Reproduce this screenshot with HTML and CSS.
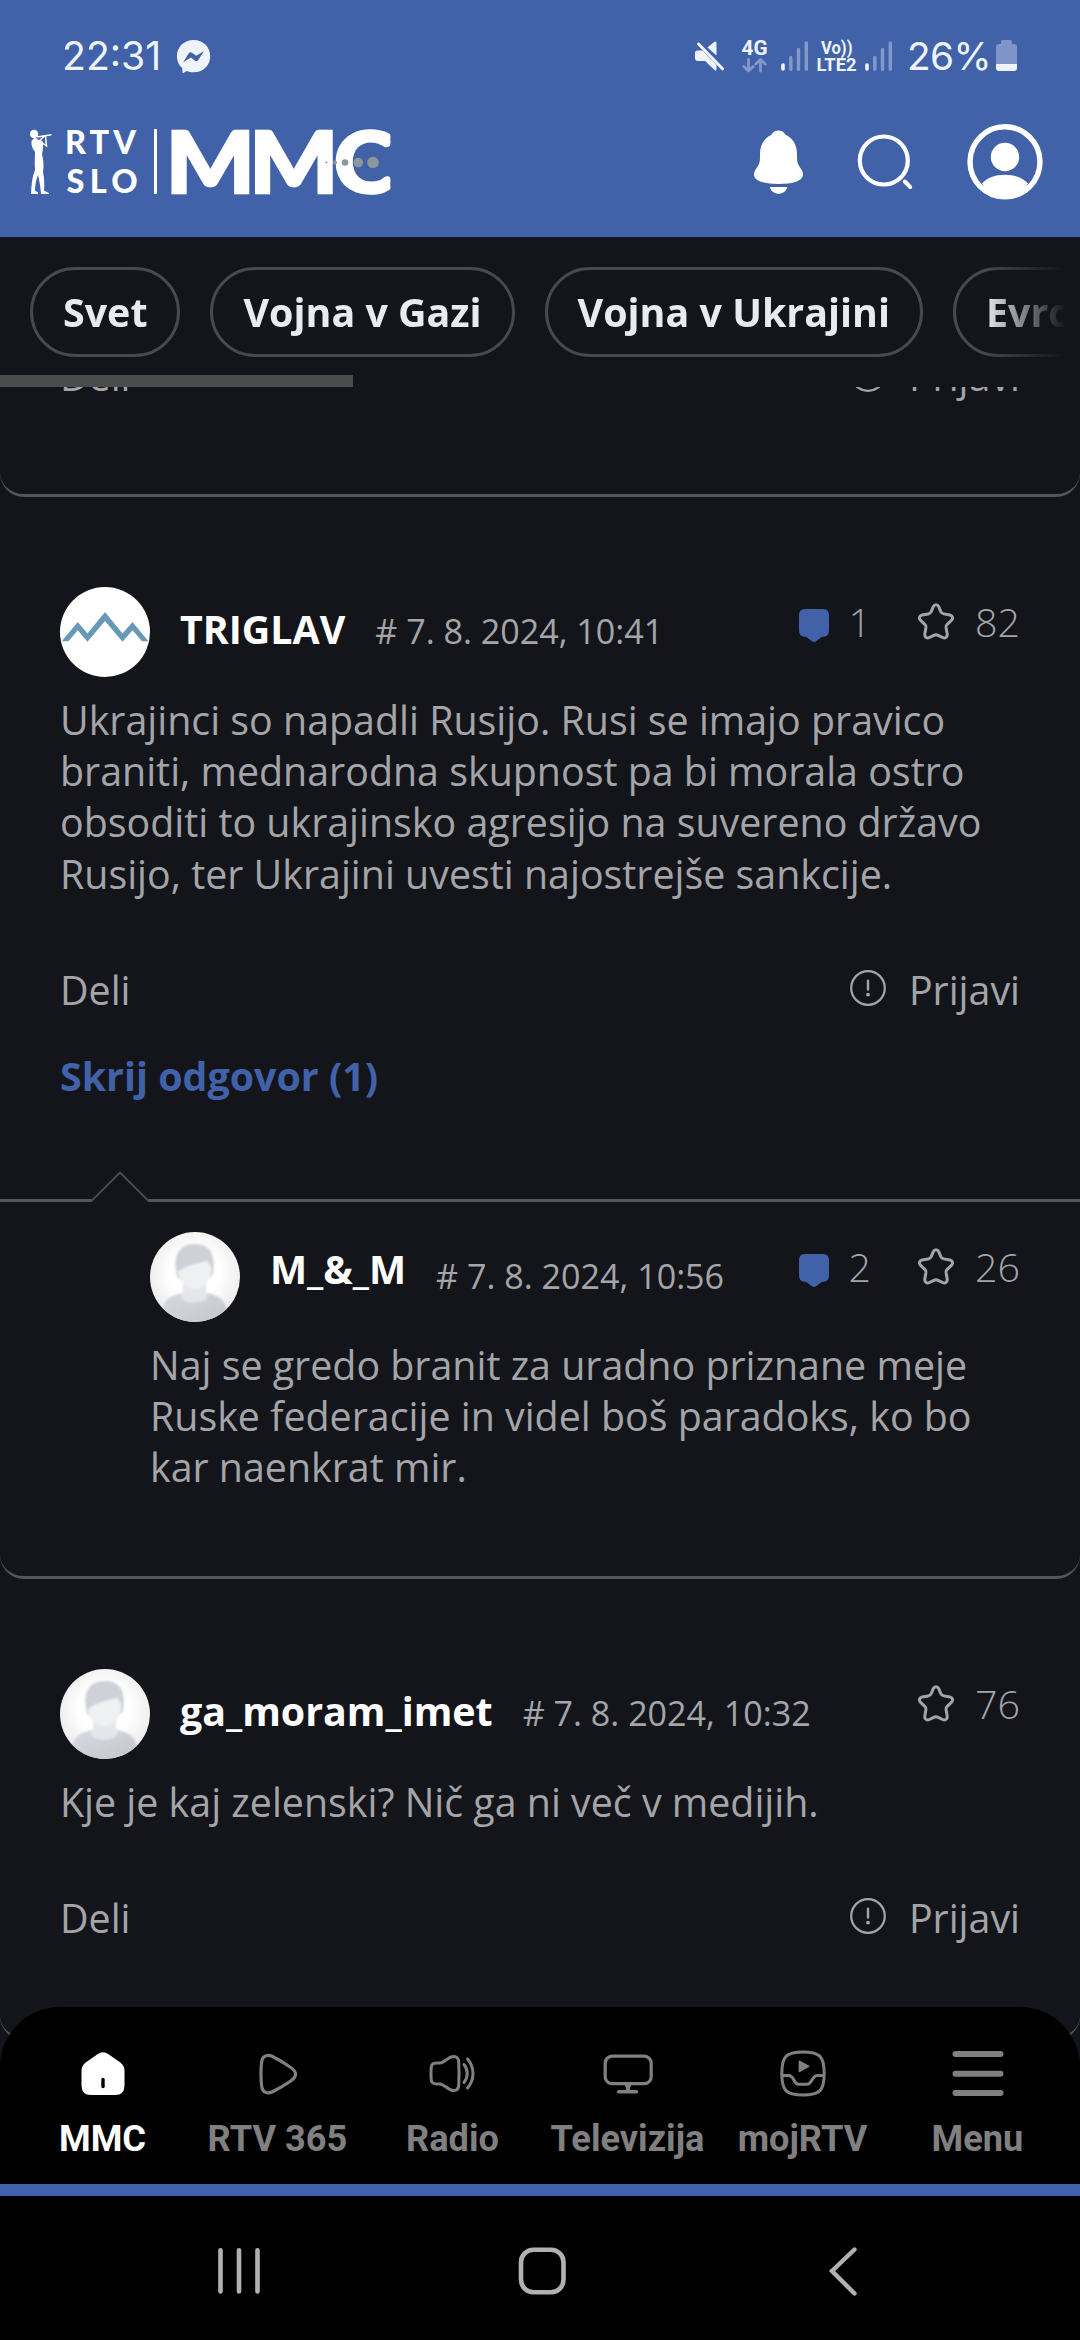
FILE: index.html
```html
<!DOCTYPE html>
<html lang="sl">
<head>
<meta charset="utf-8">
<title>RTV SLO MMC</title>
<link rel="stylesheet" href="styles.css">
</head>
<body>
<svg class="defs" aria-hidden="true">
  <defs>
    <radialGradient id="avatar-bg" cx="50%" cy="45%" r="55%">
      <stop offset="0.5" stop-color="#ffffff"/>
      <stop offset="1" stop-color="#ececee"/>
    </radialGradient>
    <linearGradient id="avatar-body" x1="0" y1="0" x2="1" y2="1">
      <stop offset="0" stop-color="#d6d9df"/>
      <stop offset="1" stop-color="#c3c6cb"/>
    </linearGradient>
    <clipPath id="avatar-clip"><circle cx="45" cy="45" r="45"/></clipPath>
    <filter id="soft" x="-10%" y="-10%" width="120%" height="120%"><feGaussianBlur stdDeviation="0.9"/></filter>
  </defs>
  <symbol id="person" viewBox="0 0 90 90">
    <circle cx="45" cy="45" r="45" fill="url(#avatar-bg)"/>
    <g clip-path="url(#avatar-clip)">
      <g filter="url(#soft)">
        <path d="M12 92 C11 70 15 65 32 61 H57 C74 65 78 70 77 92Z" fill="url(#avatar-body)"/>
        <path d="M33 48 H56 V60 C58 62 58 65 56 67 C51 72 37 72 32 67 C30 64 31 62 33 60Z" fill="#e4e6e9"/>
        <path d="M27 44 C22 25 28 12 45 12 C60 12 66 22 63 42 C60 50 30 52 27 44Z" fill="#ced1d7"/>
        <path d="M28 40 C34 34 48 31 57 29 C60 32 62 36 61 41 C59 50 53 57 45 57 C36 57 29 49 28 40Z" fill="#eff0f2"/>
      </g>
    </g>
  </symbol>
  <symbol id="star" viewBox="0 0 36 37">
    <path d="M15.3 3.6 C16.4 1.1 19.6 1.1 20.7 3.6 L22.8 8.6 C23.4 9.9 24.3 10.6 25.8 10.9 L32 12 C34.8 12.6 35.4 15.4 33.4 17.3 L29.2 21.3 C28.2 22.3 27.9 23.3 28.1 24.7 L29.2 31 C29.6 34 27.2 35.8 24.6 34.5 L20.2 32.3 C18.7 31.6 17.3 31.6 15.8 32.3 L11.4 34.5 C8.8 35.8 6.4 34 6.8 31 L7.9 24.7 C8.1 23.3 7.8 22.3 6.8 21.3 L2.6 17.3 C0.6 15.4 1.2 12.6 4 12 L10.2 10.9 C11.7 10.6 12.6 9.9 13.2 8.6Z" fill="none" stroke="#a4a5a9" stroke-width="3"/>
  </symbol>
  <symbol id="bubble" viewBox="0 0 30 33">
    <path d="M6 0 H24 Q30 0 30 6 V21 Q30 27.5 24.5 27.8 Q22.5 27.8 21 29.2 L17 32.2 Q15 33.6 13 32.2 L9 29.2 Q7.5 27.8 5.5 27.8 Q0 27.5 0 21 V6 Q0 0 6 0Z" fill="#4162a9"/>
  </symbol>
  <symbol id="report" viewBox="0 0 36 36">
    <circle cx="18" cy="18" r="16.8" fill="none" stroke="#a4a5a9" stroke-width="2.2"/>
    <path d="M18 10.8 V19.6" stroke="#a4a5a9" stroke-width="2.4" stroke-linecap="round"/>
    <circle cx="18" cy="24.6" r="1.9" fill="#a4a5a9"/>
  </symbol>
  <symbol id="signal" viewBox="0 0 28 30">
    <path d="M9.8 16.5V28.2M17.5 8.5V28.2M25.3 2V28.2" stroke="#8299c9" stroke-width="3.4" stroke-linecap="round"/>
    <path d="M2 24V28" stroke="#eff3fc" stroke-width="3.6" stroke-linecap="round"/>
  </symbol>
</svg>

<div class="screen">
  <header class="top">
    <div class="status">
      <span class="status-text">22:31</span>
      <svg class="ico-messenger" viewBox="176 36 36 40" width="36" height="40">
        <path d="M193.6 40 C203 40 210.2 46.900 210.200 56.200 C210.200 65.500 203 72.300 193.600 72.300 C191 72.300 188.700 71.800 186.600 71 L183.500 73 C183 73.300 182.500 73 182.500 72.400 L182.300 68.200 C178.900 65.300 176.900 61.200 176.900 56.200 C176.900 46.900 184.200 40 193.600 40Z" fill="#eff3fc"/>
        <path d="M183.200 62.200 L188.600 53.600 C189.500 52.200 191 52 192.300 52.900 L196.200 55.800 L203.800 51.200 L198.500 59.800 C197.600 61.200 196 61.500 194.700 60.500 L190.900 57.600Z" fill="#4162a9"/>
      </svg>
      <span class="spacer"></span>
      <svg viewBox="692 36 34 40" width="34" height="40">
        <path d="M694 53 Q694 50.500 696.500 50.500 H701.500 L715.500 65 V69 Q715.500 71.500 713.500 70 L704 61 H697 Q694 61 694 58Z M706.500 47.500 L713.200 42 Q715.500 40.500 715.500 43.500 V55.500Z" fill="#eff3fc"/>
        <path d="M697.500 44 L721.500 68.800" stroke="#eff3fc" stroke-width="3" stroke-linecap="round"/>
      </svg>
      <svg class="ico-4g" viewBox="740 36 28 40" width="28" height="40">
        <text class="tiny" x="740.500" y="54.600" font-size="19.600" textLength="26" lengthAdjust="spacingAndGlyphs">4G</text>
        <path d="M747.500 59.500V71M742.800 66.500L747.500 71L752.200 66.500M759.500 71V59.500M754.800 64L759.500 59.500L764.200 64" fill="none" stroke="#8299c9" stroke-width="2.800" stroke-linecap="round" stroke-linejoin="round"/>
      </svg>
      <svg class="ico-signal"><use href="#signal"/></svg>
      <svg class="ico-lte" viewBox="815 36 42 40" width="42" height="40">
        <text class="tiny" x="820" y="54" font-size="18" textLength="31.500" lengthAdjust="spacingAndGlyphs">Vo))</text>
        <text class="tiny" x="815.500" y="71.200" font-size="18" textLength="40" lengthAdjust="spacingAndGlyphs">LTE2</text>
      </svg>
      <svg class="ico-signal ico-signal-2"><use href="#signal"/></svg>
      <span class="status-text battery-text">26%</span>
      <svg class="ico-battery" viewBox="996 36 21 40" width="21" height="40">
        <path d="M1002.500 40 H1010.500 Q1012 40 1012 42 V44 H1014 Q1017 44 1017 47 V64 H996 V47 Q996 44 999 44 H1001 V42 Q1001 40 1002.500 40Z" fill="#7f95c7"/>
        <path d="M996 64 H1017 V68 Q1017 71 1014 71 H999 Q996 71 996 68Z" fill="#eff3fc"/>
      </svg>
    </div>

    <div class="brand-row">
      <svg viewBox="30 120 366 84" width="366" height="84" role="img" aria-label="RTV SLO MMC">
        <g fill="#fff">
          <circle cx="34" cy="134" r="4.200"/>
          <path d="M35 137 L38.500 140 L42.500 141 C43.500 146 43 150 42 154 C43.500 160 44 166 43 172 C44.500 179 44.500 185 44 190.500 L49 193 V194 H41 C40.500 187 39.500 181 38 175 C36 180 35 186 35 190.500 L38 192.500 V194 H31 C31.500 185 32 177 35 170 C34.500 162 35 156 35 152 C32.500 149 31 145 31.500 141Z"/>
          <path d="M37 137 L51.500 134.800 M38 142 L45 135.500 M41 142 L46.500 146 L45.500 136" fill="none" stroke="#fff" stroke-width="1.500"/>
          <text class="brand-small" x="65" y="153.500" textLength="71" lengthAdjust="spacing">RTV</text>
          <text class="brand-small" x="66.500" y="192.500" textLength="71" lengthAdjust="spacing">SLO</text>
          <rect x="154" y="129" width="3" height="65"/>
          <svg x="165" y="120" width="225.300" height="84" viewBox="165 120 225.300 84">
            <text class="brand-big" transform="scale(1.090 1)" x="152.100 228.700 306.100" y="192.800">MMC</text>
          </svg>
        </g>
        <g fill="#8b979b">
          <circle cx="326.500" cy="162.500" r="1"/><circle cx="335" cy="162.500" r="2"/><circle cx="345" cy="162.500" r="3.300"/><circle cx="358.300" cy="162.500" r="4.800"/><circle cx="373" cy="162.500" r="5.800"/>
        </g>
      </svg>
      <span class="spacer"></span>
      <svg viewBox="750 120 56 84" width="56" height="84">
        <path d="M778.500 130.500 C781.800 130.500 784 132 785.600 134.800 C793 138.500 797 145 797 154 V158 C797 162 798 164.500 800 167.500 C802 170.200 803 172 803 174.500 C803 181 793 184 778.500 184 C764 184 754 181 754 174.500 C754 172 755 170.200 757 167.500 C759 164.500 760 162 760 158 V154 C760 145 764 138.500 771.400 134.800 C773 132 775.200 130.500 778.500 130.500Z M769.700 187 H787.500 C786 191.500 782.500 193.800 778.600 193.800 C774.700 193.800 771.200 191.500 769.700 187Z" fill="#fff"/>
      </svg>
      <svg class="ico-search" viewBox="854 120 62 84" width="62" height="84">
        <circle cx="883.800" cy="160.500" r="24" fill="none" stroke="#fff" stroke-width="4.200"/>
        <path d="M904.800 181.500 L910.200 187" stroke="#fff" stroke-width="4" stroke-linecap="round"/>
      </svg>
      <svg class="ico-profile" viewBox="967 120 76 84" width="76" height="84">
        <circle cx="1005" cy="161.800" r="35" fill="none" stroke="#fff" stroke-width="5.400"/>
        <circle cx="1005" cy="157" r="14.200" fill="#fff"/>
        <path d="M982 183.500 C987 178 995 174.800 1005 174.800 C1015 174.800 1023 178 1028 183.500 C1023 192 1015 197 1005 197 C995 197 987 192 982 183.500Z" fill="#fff"/>
      </svg>
    </div>
  </header>

  <nav class="topics">
    <a class="chip">Svet</a>
    <a class="chip">Vojna v Gazi</a>
    <a class="chip">Vojna v Ukrajini</a>
    <a class="chip">Evropska unija</a>
  </nav>
  <div class="progress"><div class="progress-bar"></div></div>

  <main class="feed">
    <section class="card card-clipped">
      <div class="actions"><span>Deli</span><span class="report"><svg class="ico-report"><use href="#report"/></svg>Prijavi</span></div>
    </section>

    <section class="card card-thread">
      <div class="head">
        <svg class="avatar" viewBox="0 0 90 90">
          <circle cx="45" cy="45" r="45" fill="#fff"/>
          <path d="M1.800 54.300 L17.700 35 L27.500 46.500 L45 25 L62.500 46.500 L72.500 35 L88.400 54.300 H82 L72.500 43.300 L62.500 54.700 L45 34 L27.500 54.700 L17.700 43.300 L8.500 54.300Z" fill="#6699b8"/>
        </svg>
        <b class="name">TRIGLAV</b>
        <span class="date"># 7. 8. 2024, 10:41</span>
        <span class="stats"><svg class="ico-bubble"><use href="#bubble"/></svg><span class="replies-count">1</span><svg class="ico-star"><use href="#star"/></svg>82</span>
      </div>
      <p class="text">Ukrajinci so napadli Rusijo. Rusi se imajo pravico<br>braniti, mednarodna skupnost pa bi morala ostro<br>obsoditi to ukrajinsko agresijo na suvereno državo<br>Rusijo, ter Ukrajini uvesti najostrejše sankcije.</p>
      <div class="actions"><span>Deli</span><span class="report"><svg class="ico-report"><use href="#report"/></svg>Prijavi</span></div>
      <a class="toggle">Skrij odgovor (1)</a>
      <div class="reply">
        <svg class="notch" viewBox="0 0 60 31" width="60" height="31"><path d="M1.500 31 L30 1.500 L58.500 31Z" fill="#14151a"/><path d="M1 30.500 L30 1.500 L59 30.500" fill="none" stroke="#4c4d50" stroke-width="1.800"/></svg>
        <div class="head">
          <svg class="avatar"><use href="#person"/></svg>
          <b class="name">M_&amp;_M</b>
          <span class="date"># 7. 8. 2024, 10:56</span>
          <span class="stats"><svg class="ico-bubble"><use href="#bubble"/></svg><span class="replies-count">2</span><svg class="ico-star"><use href="#star"/></svg>26</span>
        </div>
        <p class="text">Naj se gredo branit za uradno priznane meje<br>Ruske federacije in videl boš paradoks, ko bo<br>kar naenkrat mir.</p>
      </div>
    </section>

    <section class="card">
      <div class="head">
        <svg class="avatar"><use href="#person"/></svg>
        <b class="name">ga_moram_imet</b>
        <span class="date"># 7. 8. 2024, 10:32</span>
        <span class="stats"><svg class="ico-star"><use href="#star"/></svg>76</span>
      </div>
      <p class="text">Kje je kaj zelenski? Nič ga ni več v medijih.</p>
      <div class="actions"><span>Deli</span><span class="report"><svg class="ico-report"><use href="#report"/></svg>Prijavi</span></div>
    </section>
  </main>

  <nav class="tabs">
    <a class="tab tab-active">
      <svg viewBox="0 0 60 50"><path d="M24.500 4.200 Q30 .5 35.500 4.200 L47 12.300 Q51.500 15.500 51.500 20.500 V35.500 Q51.500 45 42 45 H18 Q8.500 45 8.500 35.500 V20.500 Q8.500 15.500 13 12.300Z" fill="#fff"/><path d="M30 29.500V36.500" stroke="#000" stroke-width="3.400" stroke-linecap="round"/></svg>
      <span>MMC</span>
    </a>
    <a class="tab">
      <svg viewBox="0 0 60 50"><path d="M13 23.500 C13 16 13.300 12.500 14.200 9.500 C15.500 5.500 20 4.300 24.500 6.500 C29 8.700 37 13.500 42 17 C49.500 22 49.500 26.500 42 31.500 C37 35 29 39.500 24.500 41.700 C20 43.900 15.500 42.700 14.200 38.500 C13.300 35.500 13 31 13 23.500Z" fill="none" stroke="#808080" stroke-width="3.200"/></svg>
      <span>RTV 365</span>
    </a>
    <a class="tab">
      <svg viewBox="0 0 60 50"><path d="M8 23.500 C8 19 8 17 8.800 15.200 C10 12.300 13 13.200 17 13 C20.500 12.800 24 8.500 28 7 C32 5.600 35.300 7 35.700 11.500 C36.100 18 36.100 29 35.700 35.500 C35.300 40 32 41.400 28 40 C24 38.500 20.500 34.200 17 34 C13 33.800 10 34.700 8.800 31.800 C8 30 8 28 8 23.500Z M41 14.500 C45.300 20 45.300 27 41 32.500 M44.500 9 C51.800 17.500 51.800 29.500 44.500 38" fill="none" stroke="#808080" stroke-width="3" stroke-linecap="round"/></svg>
      <span>Radio</span>
    </a>
    <a class="tab">
      <svg viewBox="0 0 60 50"><rect x="7.200" y="6.200" width="46" height="27.500" rx="7" fill="none" stroke="#808080" stroke-width="3.200"/><path d="M20.500 41.700H38.500" stroke="#808080" stroke-width="3.400" stroke-linecap="round"/><path d="M26.500 35 H33.500 L31.800 38 L32.500 41 H27.500 L28.200 38Z" fill="#808080"/></svg>
      <span>Televizija</span>
    </a>
    <a class="tab">
      <svg viewBox="0 0 60 50"><path d="M30 2 C47 2 51.200 6.500 51.200 23.500 C51.200 40.500 47 45 30 45 C13 45 8.800 40.500 8.800 23.500 C8.800 6.500 13 2 30 2Z M8.800 25.500 H15.500 C21.500 25.500 20.500 34.300 25.500 34.300 H34 C39.500 34.300 38.500 25.500 44.500 25.500 H51.200" fill="none" stroke="#808080" stroke-width="3"/><path d="M26.500 11.500 L35.500 16.300 L26.500 21.200Z" fill="#808080" stroke="#808080" stroke-width="1.800" stroke-linejoin="round"/></svg>
      <span>mojRTV</span>
    </a>
    <a class="tab">
      <svg viewBox="0 0 60 50"><path d="M7.500 4H52.500M7.500 23.700H52.500M7.500 43H52.500" stroke="#808080" stroke-width="6" stroke-linecap="round"/></svg>
      <span>Menu</span>
    </a>
  </nav>

  <footer class="system">
    <svg viewBox="0 0 60 60"><path d="M11.500 9.200V50.500M30 9.200V50.500M48.500 9.200V50.500" stroke="#b1b1b1" stroke-width="4.600" stroke-linecap="round"/></svg>
    <svg viewBox="0 0 60 60"><rect x="9" y="8.800" width="42.500" height="42.500" rx="12.500" fill="none" stroke="#b1b1b1" stroke-width="4.600"/></svg>
    <svg viewBox="0 0 60 60"><path d="M40.500 8.500L18 30L40.500 52.500" fill="none" stroke="#b1b1b1" stroke-width="4.400" stroke-linecap="round"/></svg>
  </footer>
</div>
</body>
</html>
```
FILE: styles.css
```css
* { box-sizing: border-box; }

body {
  margin: 0;
  background: #14151a;
  font-family: "Open Sans", "Noto Sans", sans-serif;
  color: #a4a5a9;
}

svg { display: block; flex: none; }
.defs { position: absolute; width: 0; height: 0; }

.screen {
  display: flex;
  flex-direction: column;
  width: 1080px;
  height: 2340px;
  overflow: hidden;
}

.spacer { flex: 1; }

/* Top area */
.top {
  flex: none;
  height: 237px;
  background: #4162a9;
}

.status {
  display: flex;
  height: 120px;
  padding: 36px 63px 0 62px;
}

.status-text {
  font: 400 39.200px/40px "Inter", sans-serif;
  height: 40px;
  color: #eff3fc;
}

.tiny {
  font-family: "Roboto", sans-serif;
  font-weight: 700;
  fill: #eff3fc;
}

.ico-messenger { margin-left: 15px; }
.ico-4g { margin-left: 14px; }
.ico-signal { width: 28px; height: 30px; margin: 5px 0 0 12px; }
.ico-lte { margin-left: 7px; }
.ico-signal-2 { margin-left: 7px; }
.battery-text { margin-left: 14px; font-size: 38.800px; letter-spacing: -0.6px; }
.ico-battery { margin-left: 5px; }

.brand-row {
  display: flex;
  padding: 0 37px 0 30px;
}

.brand-small { font: 900 32.500px "Lato", sans-serif; }
.brand-big { font: 900 86px "Lato", sans-serif; stroke: #fff; stroke-width: 2.500px; }
.ico-search { margin-left: 48px; }
.ico-profile { margin-left: 51px; }

/* Topic chips */
.topics {
  display: flex;
  flex: none;
  gap: 30px;
  height: 138px;
  padding: 30px 0 0 30px;
  overflow: hidden;
  -webkit-mask-image: linear-gradient(90deg, #000 985px, transparent 1065px);
  mask-image: linear-gradient(90deg, #000 985px, transparent 1065px);
}

.chip {
  flex: none;
  height: 90px;
  padding: 0 30px;
  border: 3px solid #48494c;
  border-radius: 45px;
  font-size: 39.400px;
  line-height: 85px;
  font-weight: 700;
  color: #e9ebf1;
}

.progress { flex: none; height: 12px; }
.progress-bar { width: 353px; height: 12px; background: #4b4c4e; }

/* Comments */
.feed {
  flex: 1;
  min-height: 0;
  overflow: hidden;
}

.card {
  padding: 90px 60px 91.700px;
  border-bottom: 3px solid #55565a;
  border-radius: 0 0 24px 24px;
  font-size: 39.360px;
}

.card-clipped { display: flow-root; padding-top: 0; height: 110px; }
.card-clipped .actions { margin-top: -38.400px; }
.card-thread { padding-bottom: 0; height: 1082px; }

.head {
  display: flex;
  align-items: flex-start;
  height: 90px;
}

.avatar { width: 90px; height: 90px; margin-right: 30px; }

.name {
  margin: 14.500px 30px 0 0;
  font-size: 39.360px;
  line-height: 54px;
  color: #fff;
}

.date {
  margin-top: 21px;
  font-size: 34.100px;
  line-height: 47px;
}

.stats {
  display: flex;
  align-items: center;
  margin: 7.600px 0 0 auto;
  height: 54px;
  line-height: 54px;
  font-weight: 300;
}

.replies-count { margin-right: 47px; }
.ico-bubble { width: 30px; height: 33px; margin: 8px 20px 0 0; }
.ico-star { width: 36px; height: 37px; margin-right: 21px; }

.text {
  margin: 17.600px 0 0;
  line-height: 51.400px;
  white-space: nowrap;
}

.actions {
  display: flex;
  justify-content: space-between;
  margin-top: 63px;
  line-height: 54px;
}

.report { display: flex; align-items: center; gap: 23px; }
.ico-report { width: 36px; height: 36px; margin-bottom: 4px; }

.toggle {
  display: block;
  margin-top: 32px;
  line-height: 54px;
  font-weight: 700;
  color: #4162a9;
}

.reply {
  position: relative;
  margin: 95.800px -60px 0;
  padding: 30px 60px 0 150px;
  border-top: 3px solid #55565a;
}

.reply .name { margin-top: 9.500px; }
.notch { position: absolute; left: 90px; top: -31px; }

/* Bottom navigation */
.tabs {
  position: relative;
  display: grid;
  grid-template-columns: repeat(6, 175px);
  justify-content: center;
  flex: none;
  height: 189px;
  margin-top: -60px;
  padding-top: 43px;
  border-bottom: 12px solid #4162a9;
  border-radius: 60px 60px 0 0;
  background: #000;
}

.tab {
  display: flex;
  flex-direction: column;
  align-items: center;
  font: 700 36.200px/42px "Roboto", sans-serif;
  color: #808080;
}

.tab svg { width: 60px; height: 50px; margin-bottom: 18px; }
.tab-active { color: #fff; }

.system {
  display: flex;
  flex: none;
  height: 144px;
  padding: 45px 206px 0 209px;
  justify-content: space-between;
  background: #000;
}

.system svg { width: 60px; height: 60px; }
```
